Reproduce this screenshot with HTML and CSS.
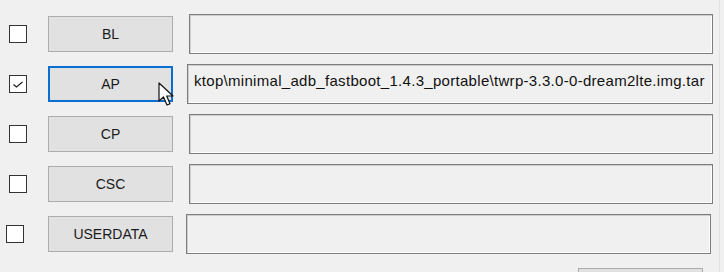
FILE: index.html
```html
<html>
  <head>
    <link rel="stylesheet" href="styles.css">
  </head>
  <body>
    <div class="panel">
      <div class="file-row">
        <span class="check"></span>
        <button class="slot-button">BL</button>
        <div class="path-field"></div>
      </div>
      <div class="file-row">
        <span class="check checked">
          <svg width="16" height="16" viewBox="0 0 16 16"><path d="M3.5 8.5 L6.5 11 L12.5 6" fill="none" stroke="#222" stroke-width="1.3"/></svg>
        </span>
        <button class="slot-button focused">AP
          <svg class="cursor" width="20" height="26" viewBox="0 0 20 26"><path d="M1 1 L1 19 L5.5 15 L9 23 L12 21.8 L8.7 14 L15 14 Z" fill="#fff" stroke="#111" stroke-width="1.2" stroke-linejoin="round"/></svg>
        </button>
        <div class="path-field shifted">ktop\minimal_adb_fastboot_1.4.3_portable\twrp-3.3.0-0-dream2lte.img.tar</div>
      </div>
      <div class="file-row">
        <span class="check"></span>
        <button class="slot-button">CP</button>
        <div class="path-field"></div>
      </div>
      <div class="file-row">
        <span class="check"></span>
        <button class="slot-button">CSC</button>
        <div class="path-field"></div>
      </div>
      <div class="file-row last">
        <span class="check"></span>
        <button class="slot-button">USERDATA</button>
        <div class="path-field"></div>
      </div>
      <div class="action-row">
        <button class="slot-button"></button>
      </div>
    </div>
  </body>
</html>
```

FILE: styles.css
```css
body {
    margin: 0;
    background: #f0f0f0;
    font-family: "Liberation Sans", Arial, sans-serif;
    overflow: hidden;
}
.panel {
    height: 272px;
    padding-top: 14px;
    box-sizing: border-box;
    display: flex;
    flex-direction: column;
    gap: 10px;
    border-right: 1px solid #e2e2e2;
    width: 720px;
    overflow: hidden;
}
.file-row {
    height: 40px;
    flex: none;
    display: flex;
    flex-direction: row;
    align-items: center;
}
.check {
    width: 16px;
    height: 16px;
    margin-left: 9px;
    border: 1px solid #333;
    background: #fff;
    display: flex;
    align-items: center;
    justify-content: center;
}
.slot-button {
    position: relative;
    width: 125px;
    height: 36px;
    margin-left: 21px;
    padding: 0;
    background: #e1e1e1;
    border: 1px solid #adadad;
    font-family: "Liberation Sans", Arial, sans-serif;
    font-size: 14px;
    color: #1a1a1a;
    box-sizing: border-box;
}
.slot-button.focused {
    border: 2px solid #0a6fd0;
}
.cursor {
    position: absolute;
    left: 108px;
    top: 14px;
}
.path-field {
    width: 524px;
    height: 40px;
    margin-left: 16px;
    box-sizing: border-box;
    border: 1px solid #7d7d7d;
    box-shadow: inset 1px 1px 0 #cfcfcf, inset -1px -1px 0 #fff;
    background: #f0f0f0;
    font-size: 15px;
    letter-spacing: 0.3px;
    color: #111;
    padding: 7px 0 0 6px;
    white-space: nowrap;
    overflow: hidden;
}
.path-field.shifted {
    width: 526px;
    margin-left: 14px;
}
.file-row.last .check {
    margin-left: 6px;
}
.file-row.last .slot-button {
    margin-left: 24px;
}
.file-row.last .path-field {
    width: 525px;
    margin-left: 13px;
}
.action-row {
    display: flex;
    padding-left: 557px;
    margin-top: 4px;
    height: 4px;
    overflow: hidden;
    flex: none;
}
.action-row .slot-button {
    flex: none;
}
```
